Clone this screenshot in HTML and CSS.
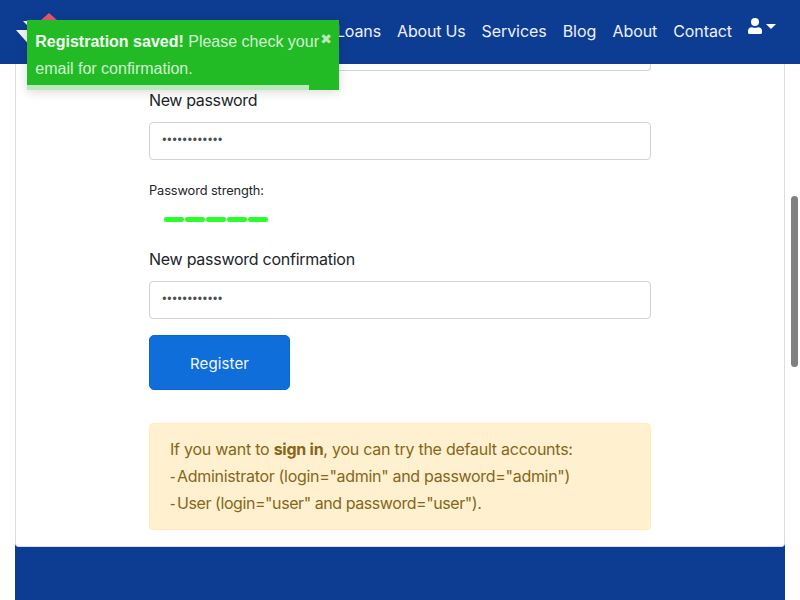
FILE: index.html
```html
<!DOCTYPE html>
<html lang="en">
<head>
<meta charset="utf-8">
<title>Registration</title>
<link rel="stylesheet" href="styles.css">
</head>
<body>
<header class="navbar">
  <svg class="logo" width="66" height="44" viewBox="0 0 66 44" aria-hidden="true">
    <path d="M33 3 50 18H16z" fill="#ea5470"/>
    <path d="M7 11h14v14zM0 20h16v18z" fill="#f4f6fa"/>
  </svg>
  <nav class="links">
    <a class="l-loans">Loans</a><a class="l-us">About Us</a><a class="l-services">Services</a><a class="l-blog">Blog</a><a class="l-about">About</a><a class="l-contact">Contact</a>
  </nav>
  <div class="account">
    <svg width="14" height="16" viewBox="0 0 14 16" aria-hidden="true"><circle cx="7" cy="4" r="4" fill="#fff"/><path fill="#fff" d="M4 9.200Q7 10.200 10 9.200Q14 9.400 14 13v1.500Q14 16 12.500 16h-11Q0 16 0 14.500V13Q0 9.400 4 9.200z"/></svg>
    <span class="caret"></span>
  </div>
</header>
<main class="page">
  <section class="card">
    <form class="form">
      <div class="field-end"></div>
      <label class="label l-new">New password</label>
      <div class="input">••••••••••••</div>
      <div class="strength">
        <small>Password strength:</small>
        <ul class="bars"><li></li><li></li><li></li><li></li><li></li></ul>
      </div>
      <label class="label l-confirm">New password confirmation</label>
      <div class="input">••••••••••••</div>
      <button class="submit" type="button">Register</button>
      <div class="alert">
        <div class="a1">If you want to <strong>sign in</strong>, you can try the default accounts:</div>
        <div class="a2"><span class="dash">-</span>Administrator (login="admin" and password="admin")</div>
        <div class="a3"><span class="dash">-</span>User (login="user" and password="user").</div>
      </div>
    </form>
  </section>
</main>
<div class="toast">
  <div class="toast-text"><strong>Registration saved!</strong> Please check your<br>email for confirmation.</div>
  <span class="close">✖</span>
  <div class="progress"></div>
</div>
<div class="scroll-thumb"></div>
</body>
</html>
```
FILE: styles.css
```css
* { box-sizing: border-box; }
body {
  margin: 0;
  height: 600px;
  overflow: hidden;
  background: #fff;
  color: #212529;
  font: 16px/27px Inter, "Liberation Sans", sans-serif;
}
.navbar {
  display: flex;
  align-items: flex-start;
  height: 64px;
  padding: 0 24px 0 16px;
  background: #0d3c93;
}
.logo { margin-top: 10px; }
.links {
  display: flex;
  gap: 16px;
  margin: 18px 16px 0 auto;
  color: #edf1f8;
  white-space: nowrap;
}
.l-loans { letter-spacing: -0.1px; }
.l-us { letter-spacing: -0.2px; }
.l-services { letter-spacing: -0.06px; }
.l-about { letter-spacing: -0.05px; }
.l-contact { letter-spacing: -0.1px; }
.account { display: flex; gap: 4px; margin-top: 18px; }
.caret {
  margin-top: 6px;
  border: 5px solid transparent;
  border-top: 5px solid #fff;
  border-bottom: 0;
  height: 5px;
}
.page {
  height: 536px;
  margin: 0 15px;
  background: #0d3c93;
}
.card {
  height: 483px;
  padding: 0 133px;
  background: #fff;
  border: 1px solid #dcdddd;
  border-top: 0;
  border-radius: 0 0 4px 4px;
}
.form { display: flex; flex-direction: column; align-items: stretch; }
.field-end {
  height: 7px;
  margin-bottom: 16px;
  border: 1px solid #ced4da;
  border-top: 0;
  border-radius: 0 0 4px 4px;
}
.label { height: 27px; margin-bottom: 8px; white-space: nowrap; }
.l-new { letter-spacing: -0.36px; }
.l-confirm { letter-spacing: -0.26px; }
.input {
  height: 38px;
  padding: 0 12.300px;
  border: 1px solid #ced4da;
  border-radius: 4px;
  color: #495057;
  font: 12px/34px "Liberation Sans", sans-serif;
  letter-spacing: 0.87px;
}
.strength { height: 86px; padding-top: 17px; }
.strength small {
  display: block;
  font-size: 12.8px;
  line-height: 27px;
  letter-spacing: -0.1px;
}
.bars {
  display: flex;
  gap: 1px;
  margin: 13px 0 0 15px;
  padding: 0;
  list-style: none;
}
.bars li { width: 20px; height: 5px; border-radius: 2px; background: #2bff2b; }
.submit {
  align-self: flex-start;
  width: 141px;
  height: 55px;
  margin: 16px 0 33px;
  padding: 2px 0 0;
  border: 1px solid #0d65d0;
  border-radius: 5px;
  background: #106eda;
  color: #f3f8fd;
  font: 15px/27px Inter, sans-serif;
  letter-spacing: 0.12px;
}
.alert {
  height: 107px;
  padding: 12px 20px;
  border: 1px solid #ffecb8;
  border-radius: 4px;
  background: #fff1d0;
  color: #86661a;
  white-space: nowrap;
}
.a1 { letter-spacing: -0.25px; }
.a2 { letter-spacing: -0.31px; }
.a3 { letter-spacing: -0.43px; }
.dash { display: inline-block; width: 7px; font-family: "Liberation Sans", sans-serif; line-height: 1; }
.toast {
  position: absolute;
  left: 27px;
  top: 20px;
  width: 312px;
  height: 70px;
  padding: 8px 8px 8px 8.300px;
  background: #22bb25;
  color: #d3f1d3;
  font: 16px/27px "Liberation Sans", sans-serif;
  box-shadow: 0 2px 10px rgba(0, 0, 0, .15);
}
.toast-text { white-space: nowrap; }
.toast strong { color: #f4fcf4; }
.close {
  position: absolute;
  right: 7px;
  top: 8px;
  font: bold 14px/22px "DejaVu Sans", sans-serif;
  color: #b8ebb9;
}
.progress {
  position: absolute;
  left: 0;
  bottom: 0;
  width: 282px;
  height: 5px;
  background: #b8ebb9;
}
.scroll-thumb {
  position: absolute;
  left: 791px;
  top: 196px;
  width: 7px;
  height: 171px;
  border-radius: 4px;
  background: #808080;
}
```
